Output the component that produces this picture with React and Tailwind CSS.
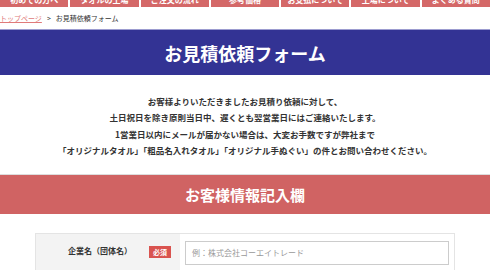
export default function App() {
  const tabs = ['初めての方へ', 'タオルの工場', 'ご注文の流れ', '参考価格', 'お支払について', '工場について', 'よくある質問'];

  return (
    <div className="w-[490px] h-[270px] overflow-hidden bg-white font-['Noto_Sans_CJK_JP',sans-serif] text-[#333]">
      {/* Global nav (scrolled up) */}
      <nav className="-mt-[8px] flex gap-[2px] h-[15px]">
        {tabs.map((t) => (
          <div
            key={t}
            className="flex-1 bg-[#d46868] flex items-center justify-center text-white font-bold text-[8px] leading-none whitespace-nowrap"
          >
            {t}
          </div>
        ))}
      </nav>

      {/* Breadcrumb */}
      <div className="h-[22px] flex items-center gap-[5px] text-[7px] leading-none">
        <a className="text-[#e07a7a] underline">トップページ</a>
        <span>&gt;</span>
        <span>お見積依頼フォーム</span>
      </div>

      {/* Page title */}
      <div className="border-t border-[#9c9cd0] bg-[#333394] h-[46px] flex items-center justify-center">
        <h1 className="text-white font-bold text-[18px] leading-none">お見積依頼フォーム</h1>
      </div>

      {/* Intro */}
      <div className="pt-[18px] text-center font-bold text-[8.5px] leading-[16.3px] text-[#333]">
        <p>お客様よりいただきましたお見積り依頼に対して、</p>
        <p>土日祝日を除き原則当日中、遅くとも翌営業日にはご連絡いたします。</p>
        <p>1営業日以内にメールが届かない場合は、大変お手数ですが弊社まで</p>
        <p>「オリジナルタオル」「粗品名入れタオル」「オリジナル手ぬぐい」の件とお問い合わせください。</p>
      </div>

      {/* Section title */}
      <div className="mt-[16px] border-t border-[#dddddd] bg-[#d06363] h-[40px] flex items-center justify-center">
        <h2 className="text-white font-bold text-[15px] leading-none">お客様情報記入欄</h2>
      </div>

      {/* Form table */}
      <div className="mt-[19px] mx-[35px] border border-[#e4e4e4] flex">
        <div className="w-[144px] bg-[#f3f3f3] flex items-start pt-[12px] pl-[32px] pr-[9px] h-[40px]">
          <span className="font-bold text-[8px] leading-none text-[#333] mt-[1px]">企業名（団体名）</span>
          <span className="ml-auto bg-[#d9534f] text-white text-[7px] font-bold leading-none px-[4px] py-[2.5px]">必須</span>
        </div>
        <div className="flex-1 pl-[5px] pr-[5px] pt-[7px]">
          <div className="h-[24px] border border-[#cccccc] flex items-center px-[6px] text-[8px] text-[#999]">
            例：株式会社コーエイトレード
          </div>
        </div>
      </div>
    </div>
  );
}
